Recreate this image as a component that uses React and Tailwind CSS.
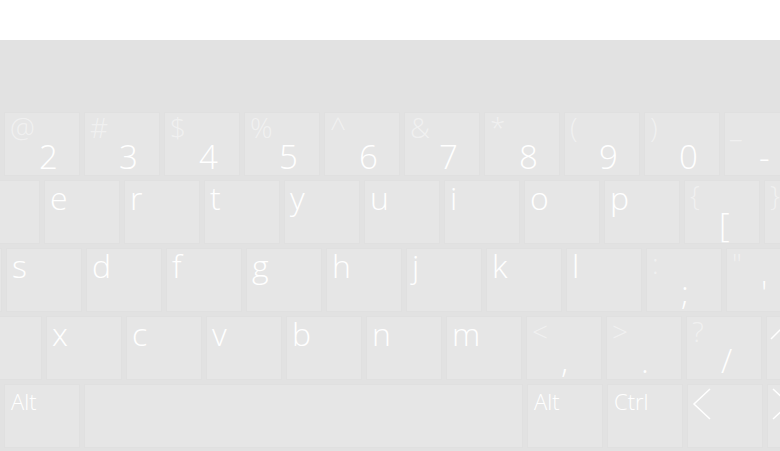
import React from 'react';

const font = { fontFamily: '"Open Sans", "Noto Sans", sans-serif' };

function Key({ w = 'w-[76px]', children }) {
  return (
    <div className={`${w} h-[64px] shrink-0 bg-[#e6e6e6] border border-[#e0e0e0] flex flex-col text-white font-light`}>
      {children}
    </div>
  );
}

function Letter({ ch }) {
  return (
    <Key>
      <span className="pl-[5px] pt-[1px] text-[32px] leading-[32px]">{ch}</span>
    </Key>
  );
}

function Dual({ top, main }) {
  return (
    <Key>
      <span className="pl-[5px] pt-[1px] text-[28px] leading-[26px] text-white/45">{top}</span>
      <span className="pl-[34px] pt-[1px] text-[33px] leading-[31px]">{main}</span>
    </Key>
  );
}

function Label({ text, w }) {
  return (
    <Key w={w}>
      <span className="pl-[6px] pt-[3px] text-[22px] leading-[26px]">{text}</span>
    </Key>
  );
}

function Chevron({ points }) {
  return (
    <Key>
      <svg width="40" height="40" viewBox="0 0 40 40" className="mt-[1px]">
        <polyline points={points} fill="none" stroke="white" strokeWidth="1.5" />
      </svg>
    </Key>
  );
}

export default function App() {
  const digits = [['@', '2'], ['#', '3'], ['$', '4'], ['%', '5'], ['^', '6'], ['&', '7'], ['*', '8'], ['(', '9'], [')', '0'], ['_', '-']];
  return (
    <div className="w-[780px] h-[451px] bg-white overflow-hidden" style={font}>
      <div className="mt-[40px] h-[411px] bg-[#e2e2e2] flex flex-col gap-[4px] overflow-hidden">
        <div className="h-[68px] shrink-0" />

        <div className="flex gap-[4px] ml-[4px]">
          {digits.map(([t, m]) => <Dual key={m} top={t} main={m} />)}
        </div>

        <div className="flex gap-[4px] ml-[-36px]">
          <Key />
          {['e', 'r', 't', 'y', 'u', 'i', 'o', 'p'].map((c) => <Letter key={c} ch={c} />)}
          <Dual top="{" main="[" />
          <Dual top="}" main="]" />
        </div>

        <div className="flex gap-[4px] ml-[-74px]">
          <Key />
          {['s', 'd', 'f', 'g', 'h', 'j', 'k', 'l'].map((c) => <Letter key={c} ch={c} />)}
          <Dual top=":" main=";" />
          <Dual top={'"'} main="'" />
        </div>

        <div className="flex gap-[4px] ml-[-34px]">
          <Key />
          {['x', 'c', 'v', 'b', 'n', 'm'].map((c) => <Letter key={c} ch={c} />)}
          <Dual top="<" main="," />
          <Dual top=">" main="." />
          <Dual top="?" main="/" />
          <Chevron points="4,21 20,5 36,21" />
        </div>

        <div className="flex gap-[4px] ml-[4px]">
          <Label text="Alt" />
          <Key w="w-[439px]" />
          <Label text="Alt" />
          <Label text="Ctrl" />
          <Chevron points="22,3 6,18 22,33" />
          <Chevron points="5,3 21,18 5,33" />
        </div>
      </div>
    </div>
  );
}
